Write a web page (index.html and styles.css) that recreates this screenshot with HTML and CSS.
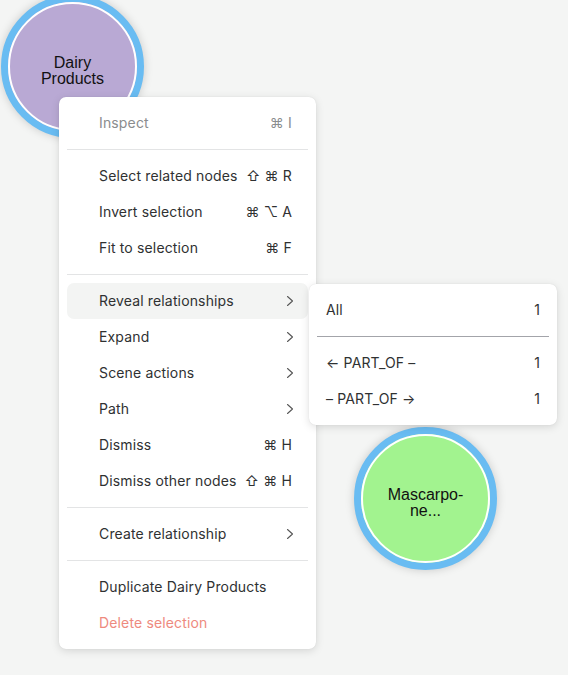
FILE: index.html
```html
<!DOCTYPE html>
<html>
<head>
<meta charset="utf-8">
<link rel="stylesheet" href="styles.css">
</head>
<body>
<div class="canvas">
  <div class="node node-dairy"><span class="node-label">Dairy<br>Products</span></div>
  <div class="node node-masc"><span class="node-label">Mascarpo-<br>ne...</span></div>

  <div class="menu main-menu">
    <div class="item disabled"><span class="label">Inspect</span><span class="kbd">⌘ I</span></div>
    <div class="sep"></div>
    <div class="item"><span class="label">Select related nodes</span><span class="kbd">⇧ ⌘ R</span></div>
    <div class="item"><span class="label">Invert selection</span><span class="kbd">⌘ ⌥ A</span></div>
    <div class="item"><span class="label">Fit to selection</span><span class="kbd">⌘ F</span></div>
    <div class="sep"></div>
    <div class="item active"><span class="label">Reveal relationships</span><svg class="chev" width="8" height="12" viewBox="0 0 8 12"><path d="M1.5 1.5 L6.5 6 L1.5 10.5" fill="none" stroke="#555" stroke-width="1.1" stroke-linecap="round" stroke-linejoin="round"/></svg></div>
    <div class="item"><span class="label">Expand</span><svg class="chev" width="8" height="12" viewBox="0 0 8 12"><path d="M1.5 1.5 L6.5 6 L1.5 10.5" fill="none" stroke="#555" stroke-width="1.1" stroke-linecap="round" stroke-linejoin="round"/></svg></div>
    <div class="item"><span class="label">Scene actions</span><svg class="chev" width="8" height="12" viewBox="0 0 8 12"><path d="M1.5 1.5 L6.5 6 L1.5 10.5" fill="none" stroke="#555" stroke-width="1.1" stroke-linecap="round" stroke-linejoin="round"/></svg></div>
    <div class="item"><span class="label">Path</span><svg class="chev" width="8" height="12" viewBox="0 0 8 12"><path d="M1.5 1.5 L6.5 6 L1.5 10.5" fill="none" stroke="#555" stroke-width="1.1" stroke-linecap="round" stroke-linejoin="round"/></svg></div>
    <div class="item"><span class="label">Dismiss</span><span class="kbd">⌘ H</span></div>
    <div class="item"><span class="label">Dismiss other nodes</span><span class="kbd">⇧ ⌘ H</span></div>
    <div class="sep"></div>
    <div class="item"><span class="label">Create relationship</span><svg class="chev" width="8" height="12" viewBox="0 0 8 12"><path d="M1.5 1.5 L6.5 6 L1.5 10.5" fill="none" stroke="#555" stroke-width="1.1" stroke-linecap="round" stroke-linejoin="round"/></svg></div>
    <div class="sep"></div>
    <div class="item"><span class="label">Duplicate Dairy Products</span></div>
    <div class="item danger"><span class="label">Delete selection</span></div>
  </div>

  <div class="menu sub-menu">
    <div class="item"><span class="label">All</span><span class="count">1</span></div>
    <div class="sep dark"></div>
    <div class="item"><span class="label">← PART_OF –</span><span class="count">1</span></div>
    <div class="item"><span class="label">– PART_OF →</span><span class="count">1</span></div>
  </div>
</div>
</body>
</html>
```
FILE: styles.css
```css
html, body {
  margin: 0;
  padding: 0;
  width: 568px;
  height: 675px;
  overflow: hidden;
  background: #f4f5f4;
}
.canvas {
  position: relative;
  width: 568px;
  height: 675px;
  font-family: Inter, "Noto Sans", sans-serif;
}
.node {
  position: absolute;
  width: 143px;
  height: 143px;
  box-sizing: border-box;
  border-radius: 50%;
  border: 7px solid #69bcf2;
  box-shadow: 0 0 10px rgba(0, 0, 0, 0.18);
  display: flex;
  align-items: center;
  justify-content: center;
  padding-top: 8px;
}
.node::before {
  content: "";
  position: absolute;
  inset: 0;
  border-radius: 50%;
  border: 2.5px solid #ffffff;
}
.node-dairy {
  left: 1px;
  top: -5px;
  background: #b9a9d4;
}
.node-masc {
  left: 354px;
  top: 427px;
  background: #a2f38f;
}
.node-label {
  position: relative;
  font-family: "Liberation Sans", Arial, sans-serif;
  font-size: 16px;
  line-height: 16px;
  color: #111;
  text-align: center;
}
.menu {
  position: absolute;
  background: #ffffff;
  border-radius: 7px;
  box-shadow: 0 2px 8px rgba(0, 0, 0, 0.13), 0 0 1px rgba(0, 0, 0, 0.12);
  padding: 8px;
  box-sizing: border-box;
  display: flex;
  flex-direction: column;
}
.main-menu {
  left: 59px;
  top: 97px;
  width: 257px;
}
.sub-menu {
  left: 309px;
  top: 284px;
  width: 248px;
}
.item {
  height: 36px;
  box-sizing: border-box;
  display: flex;
  align-items: center;
  justify-content: space-between;
  padding: 0 16px 2px 32px;
  font-size: 14px;
  letter-spacing: 0.15px;
  color: #2f3132;
  border-radius: 7px;
  white-space: nowrap;
}
.sub-menu .item {
  padding: 0 9px 2px 9px;
}
.item.active {
  background: #f3f4f3;
}
.item.disabled {
  color: #8a8c8e;
}
.item.danger {
  color: #ee8a7e;
}
.chev {
  margin-right: -2px;
  margin-top: 2px;
}
.sep {
  height: 1px;
  background: #e3e4e5;
  margin: 8px 0;
}
.sep.dark {
  background: #a3a4aa;
}
```
